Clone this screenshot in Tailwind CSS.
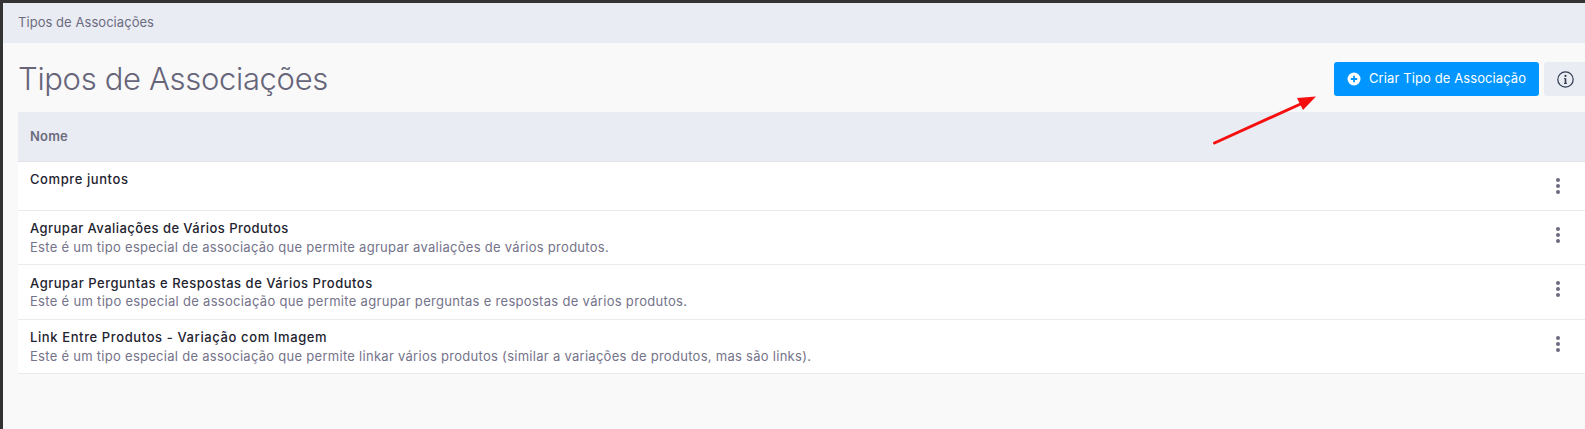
<!DOCTYPE html>
<html lang="pt-BR">
<head>
  <meta charset="UTF-8" />
  <title>Tipos de Associações</title>
  <script src="https://cdn.jsdelivr.net/npm/@tailwindcss/browser@4"></script>
</head>
<body class="bg-[#333333] font-['Inter','Noto_Sans',sans-serif] overflow-hidden">
  <div class="relative h-[429px] w-[1585px] pt-[3px] pl-[3px]">
    <div class="h-[426px] bg-[#f9f9f9]">
      <div class="h-[40px] bg-[#e9ecf3] pl-[15px] flex items-center text-[13px] tracking-[0.05px] text-[#6c6b80]">Tipos de Associações</div>

      <div class="h-[69px] pl-[15px] flex items-center justify-between">
        <h1 class="mt-[3px] text-[31px] font-light tracking-[-0.33px] text-[#66657a]">Tipos de Associações</h1>
        <div class="flex gap-[5px] mt-[3px]">
          <button class="h-[34px] w-[205px] bg-[#0095ff] rounded-[3px] flex items-center pl-[13px] text-white text-[13px] tracking-[0.1px]">
            <svg class="w-[14px] h-[14px] mr-[8px]" viewBox="0 0 14 14">
              <circle cx="7" cy="7" r="6.5" fill="#fff" />
              <path d="M7 3.8v6.4M3.8 7h6.4" stroke="#0095ff" stroke-width="1.8" />
            </svg>
            Criar Tipo de Associação
          </button>
          <button class="h-[34px] w-[41px] bg-[#e9ecf3] rounded-l-[3px] flex items-center pl-[13px]">
            <svg class="w-[17px] h-[17px]" viewBox="0 0 17 17" fill="none" stroke="#2f3a4f">
              <circle cx="8.5" cy="8.5" r="7.7" stroke-width="1.2" />
              <path d="M8.5 7.4v5" stroke-width="1.6" />
              <path d="M7 7.6h1.5M7 12.4h3" stroke-width="1" />
              <circle cx="8.5" cy="4.9" r="1.05" fill="#2f3a4f" stroke="none" />
            </svg>
          </button>
        </div>
      </div>

      <div class="ml-[15px]">
        <div class="h-[50px] bg-[#e9ecf3] border-b border-[#e2e4ea] pl-[12px] flex items-center text-[13px] font-semibold tracking-[0.2px] text-[#6c6b80]">Nome</div>

        <div class="h-[49px] bg-white border-b border-[#ebebeb] pl-[12px] pr-[25px] pt-[8px] flex justify-between">
          <div class="text-[13px] leading-[18px] font-medium tracking-[0.58px] text-[#23232f]">Compre juntos</div>
          <svg class="w-[4px] h-[16px] mt-[8px]" viewBox="0 0 4 16" fill="#6c6b80"><circle cx="2" cy="2" r="2" /><circle cx="2" cy="8" r="2" /><circle cx="2" cy="14" r="2" /></svg>
        </div>

        <div class="h-[54px] bg-white border-b border-[#ebebeb] pl-[12px] pr-[25px] pt-[8px] flex justify-between">
          <div>
            <div class="text-[13px] leading-[18px] font-medium tracking-[0.44px] text-[#23232f]">Agrupar Avaliações de Vários Produtos</div>
            <div class="mt-[1px] text-[13px] leading-[19px] tracking-[0.28px] text-[#74738a]">Este é um tipo especial de associação que permite agrupar avaliações de vários produtos.</div>
          </div>
          <svg class="w-[4px] h-[16px] mt-[8px]" viewBox="0 0 4 16" fill="#6c6b80"><circle cx="2" cy="2" r="2" /><circle cx="2" cy="8" r="2" /><circle cx="2" cy="14" r="2" /></svg>
        </div>

        <div class="h-[55px] bg-white border-b border-[#ebebeb] pl-[12px] pr-[25px] pt-[9px] flex justify-between">
          <div>
            <div class="text-[13px] leading-[18px] font-medium tracking-[0.52px] text-[#23232f]">Agrupar Perguntas e Respostas de Vários Produtos</div>
            <div class="text-[13px] leading-[19px] tracking-[0.31px] text-[#74738a]">Este é um tipo especial de associação que permite agrupar perguntas e respostas de vários produtos.</div>
          </div>
          <svg class="w-[4px] h-[16px] mt-[7px]" viewBox="0 0 4 16" fill="#6c6b80"><circle cx="2" cy="2" r="2" /><circle cx="2" cy="8" r="2" /><circle cx="2" cy="14" r="2" /></svg>
        </div>

        <div class="h-[54px] bg-white border-b border-[#ebebeb] pl-[12px] pr-[25px] pt-[8px] flex justify-between">
          <div>
            <div class="text-[13px] leading-[18px] font-medium tracking-[0.61px] text-[#23232f]">Link Entre Produtos - Variação com Imagem</div>
            <div class="mt-[1px] text-[13px] leading-[19px] tracking-[0.28px] text-[#74738a]">Este é um tipo especial de associação que permite linkar vários produtos (similar a variações de produtos, mas são links).</div>
          </div>
          <svg class="w-[4px] h-[16px] mt-[8px]" viewBox="0 0 4 16" fill="#6c6b80"><circle cx="2" cy="2" r="2" /><circle cx="2" cy="8" r="2" /><circle cx="2" cy="14" r="2" /></svg>
        </div>
      </div>
    </div>

    <!-- seta vermelha por cima da tela -->
    <svg class="absolute left-[1205px] top-[90px] w-[120px] h-[60px]" viewBox="0 0 120 60">
      <path d="M9.5 53 L100 12" stroke="#f50f0f" stroke-width="3" stroke-linecap="round" />
      <path d="M111 6.5 L92 8 L98 20 Z" fill="#f50f0f" />
    </svg>
  </div>
</body>
</html>
